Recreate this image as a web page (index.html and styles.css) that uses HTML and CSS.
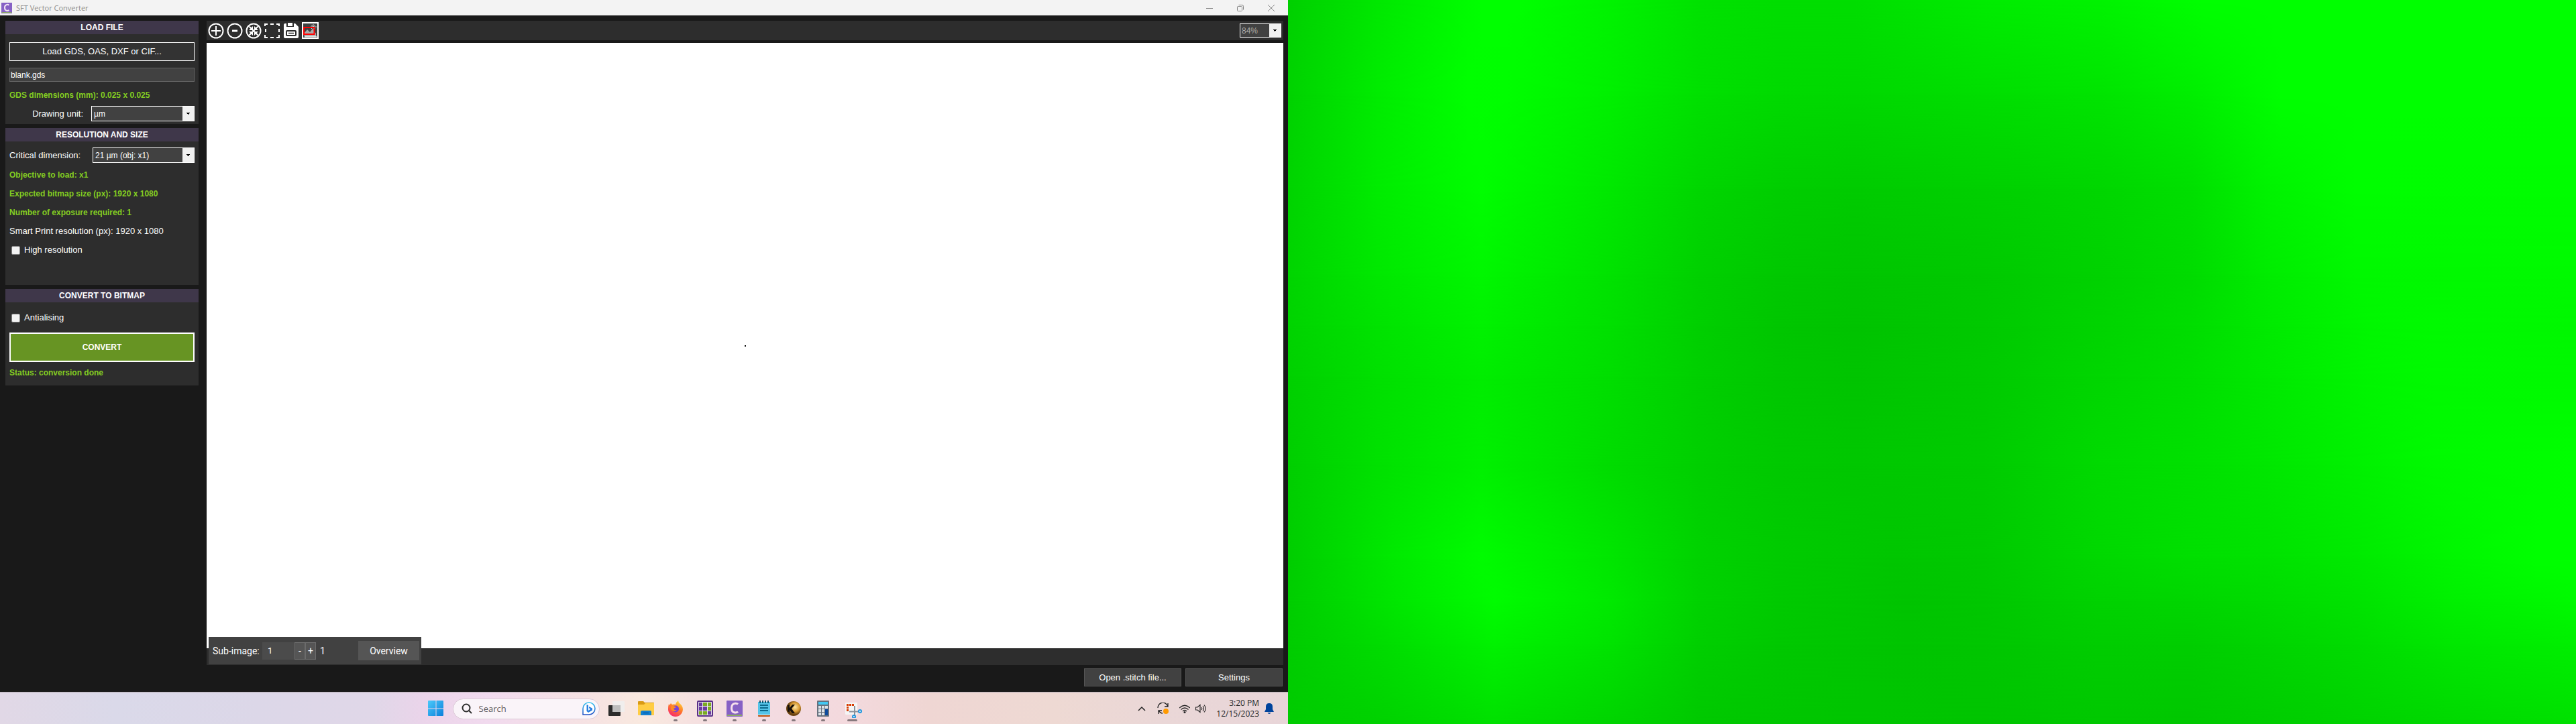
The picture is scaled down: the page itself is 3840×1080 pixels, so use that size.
FILE: index.html
```html
<!DOCTYPE html>
<html lang="en">
<head>
<meta charset="utf-8">
<title>SFT Vector Converter</title>
<link rel="stylesheet" href="styles.css">
</head>
<body>
<div class="desktop">
  <div class="monitor">
    <div class="window">
      <header class="titlebar">
        <svg class="app-icon" width="16" height="16" viewBox="0 0 24 24" aria-hidden="true"><rect width="24" height="24" fill="#8661c5"/><rect x="1" y="21" width="22" height="2" fill="#8bab62"/><path d="M17 5.500C15 3.800 7.500 3 7.500 11.200S15 18.500 17 16.500" fill="none" stroke="#f4e6f4" stroke-width="3"/></svg>
        <h1 class="title">SFT Vector Converter</h1>
        <div class="caption-buttons">
          <button class="caption-button" type="button" aria-label="Minimize"><svg width="12" height="12" viewBox="0 0 12 12"><path d="M1 6.500h10"/></svg></button>
          <button class="caption-button" type="button" aria-label="Restore"><svg width="12" height="12" viewBox="0 0 12 12"><rect x="1.500" y="3.500" width="7" height="7" rx="1"/><path d="M3.500 1.500h5q2 0 2 2v5"/></svg></button>
          <button class="caption-button" type="button" aria-label="Close"><svg width="12" height="12" viewBox="0 0 12 12"><path d="M1 1l10 10M11 1L1 11"/></svg></button>
        </div>
      </header>
      <div class="workspace">
        <aside class="sidebar">
          <section class="panel">
            <h2 class="panel-title">LOAD FILE</h2>
            <div class="panel-body load-body">
              <button class="load-button" type="button">Load GDS, OAS, DXF or CIF...</button>
              <input class="file-name" type="text" value="blank.gds" aria-label="File name">
              <p class="info">GDS dimensions (mm): 0.025 x 0.025</p>
              <div class="field">
                <label class="field-label field-label-right" for="unit">Drawing unit:</label>
                <div class="combo combo-unit"><select id="unit"><option>µm</option></select><svg width="17" height="21" viewBox="0 0 17 21"><path d="M6 9h5v1h-1v1H9v1H8v-1H7v-1H6z"/></svg></div>
              </div>
            </div>
          </section>
          <section class="panel">
            <h2 class="panel-title">RESOLUTION AND SIZE</h2>
            <div class="panel-body resolution-body">
              <div class="field">
                <label class="field-label" for="critical">Critical dimension:</label>
                <div class="combo combo-critical"><select id="critical"><option>21 µm (obj: x1)</option></select><svg width="17" height="21" viewBox="0 0 17 21"><path d="M6 9h5v1h-1v1H9v1H8v-1H7v-1H6z"/></svg></div>
              </div>
              <p class="info">Objective to load: x1</p>
              <p class="info">Expected bitmap size (px): 1920 x 1080</p>
              <p class="info">Number of exposure required: 1</p>
              <p class="note">Smart Print resolution (px): 1920 x 1080</p>
              <label class="check"><input type="checkbox">High resolution</label>
            </div>
          </section>
          <section class="panel">
            <h2 class="panel-title">CONVERT TO BITMAP</h2>
            <div class="panel-body convert-body">
              <label class="check"><input type="checkbox">Antialising</label>
              <button class="convert-button" type="button">CONVERT</button>
              <p class="info">Status: conversion done</p>
            </div>
          </section>
        </aside>
        <main class="viewer">
          <div class="toolbar">
            <button class="tool" type="button" aria-label="Zoom in"><svg width="24" height="24" viewBox="0 0 24 24"><circle cx="12" cy="12" r="10.500" fill="none" stroke="#fff" stroke-width="2"/><path d="M12 5v14M5 12h14" stroke="#fff" stroke-width="2"/></svg></button>
            <button class="tool" type="button" aria-label="Zoom out"><svg width="24" height="24" viewBox="0 0 24 24"><circle cx="12" cy="12" r="10.500" fill="none" stroke="#fff" stroke-width="2"/><path d="M8 12h8" stroke="#fff" stroke-width="3"/></svg></button>
            <button class="tool" type="button" aria-label="Fit"><svg width="24" height="24" viewBox="0 0 24 24"><circle cx="12" cy="12" r="10.500" fill="none" stroke="#fff" stroke-width="2"/><path d="M5.500 5.500l13 13M18.500 5.500l-13 13" stroke="#fff" stroke-width="2"/><path d="M11 5v6H5zM13 5v6h6zM11 19v-6H5zM13 19v-6h6z" fill="#fff"/></svg></button>
            <button class="tool" type="button" aria-label="Select area"><svg width="24" height="24" viewBox="0 0 24 24"><path d="M1 5V2h4M9 2h5M18 2h4v3M22 9v5M22 18v4h-4M14 22H9M5 22H1v-4M2 14V9" fill="none" stroke="#fff" stroke-width="2"/></svg></button>
            <button class="tool" type="button" aria-label="Save"><svg width="24" height="24" viewBox="0 0 24 24"><path d="M1 3q0-2 2-2h2v5h11V1h2l5 5v15q0 2-2 2H3q-2 0-2-2z" fill="#fff"/><path d="M7 0h7v5H7z" fill="#fff"/><rect x="5" y="12" width="14" height="7" rx="1" fill="#fff" stroke="#2d2d2d" stroke-width="2"/><path d="M8 15.500h8" stroke="#2d2d2d" stroke-width="1.500"/></svg></button>
            <button class="tool" type="button" aria-label="Show image"><svg width="25" height="25" viewBox="0 0 25 25"><rect x="1" y="1" width="23" height="23" fill="#414141" stroke="#fff" stroke-width="2"/><path d="M3 17l5-6 4 4 4-5 5 7v5H4z" fill="#aaa"/><path d="M17 3v9M13 7h9M14 4l6 6M20 4l-6 6" stroke="#c8c8c8"/><path d="M4 21.500h18" stroke="#ddd" stroke-width="2"/><rect x="3" y="8" width="15.500" height="10" fill="none" stroke="#f00" stroke-width="2"/></svg></button>
            <div class="combo combo-zoom"><select aria-label="Zoom"><option>84%</option></select><svg width="17" height="19" viewBox="0 0 17 19"><path d="M6 8h5v1h-1v1H9v1H8v-1H7V9H6z"/></svg></div>
          </div>
          <div class="canvas">
            <svg class="drawing" width="2" height="2" viewBox="0 0 2 2" aria-label="Drawing"><rect width="2" height="2"/></svg>
            <div class="navigator">
              <label class="nav-label" for="sub">Sub-image:</label>
              <div class="spinner"><input id="sub" type="text" value="1"><button type="button">-</button><button type="button">+</button></div>
              <span class="nav-total">1</span>
              <button class="overview" type="button">Overview</button>
            </div>
          </div>
          <div class="strip"></div>
          <div class="actions">
            <button class="action" type="button">Open .stitch file...</button>
            <button class="action" type="button">Settings</button>
          </div>
        </main>
      </div>
    </div>
    <footer class="taskbar">
      <nav class="apps">
        <button class="app" type="button" aria-label="Start"><svg width="24" height="24" viewBox="0 0 24 24"><defs><linearGradient id="win" x1="0" y1="0" x2="1" y2="1" gradientUnits="objectBoundingBox"><stop offset="0" stop-color="#4cc9fa"/><stop offset="1" stop-color="#0a7fdb"/></linearGradient></defs><path d="M0 1q0-1 1-1h10.500v11.500H0zM12.500 0H22q1 0 1 1v10.500H12.500zM0 12.500h11.500V23H1q-1 0-1-1zM12.500 12.500H23V22q0 1-1 1h-9.500z" fill="url(#win)"/></svg></button>
        <div class="search">
          <svg width="16" height="16" viewBox="0 0 16 16" aria-hidden="true"><circle cx="7" cy="7" r="5.500" fill="none" stroke="#2c2c2c" stroke-width="2"/><path d="M11 11l4 4" stroke="#2c2c2c" stroke-width="2"/></svg>
          <input type="text" placeholder="Search" aria-label="Search">
          <svg width="20" height="20" viewBox="0 0 20 20" aria-hidden="true"><defs><linearGradient id="bing" x1="0" y1="0" x2="0" y2="1"><stop offset="0" stop-color="#36c4f0"/><stop offset="1" stop-color="#1f4fc4"/></linearGradient></defs><path d="M1 19V10a9 9 0 1 1 9 9z" fill="#fff" stroke="url(#bing)" stroke-width="1.500"/><path d="M6.500 4l2.500 1v8l3-2-2-2V7l5 2.500v3L9 16l-2.500-2z" fill="#2a7fe0"/></svg>
        </div>
        <button class="app" type="button" aria-label="Task view"><svg width="24" height="24" viewBox="0 0 24 24"><rect x="0" y="7" width="18" height="16" rx="1" fill="#2b2b2b"/><rect x="6" y="1" width="18" height="16" rx="1" fill="#efefef" opacity=".85"/><path d="M6 7h12v10H6z" fill="#bdbdbd"/></svg></button>
        <button class="app" type="button" aria-label="File Explorer"><svg width="24" height="24" viewBox="0 0 24 24"><path d="M0 2q0-1 1-1h7l2 2h13q1 0 1 1v17H0z" fill="#d99a13"/><path d="M0 6h9l2-2h13v17q0 1-1 1H1q-1 0-1-1z" fill="#ffcd43"/><path d="M4 22v-5q0-2 2-2h12q2 0 2 2v5z" fill="#1380d0"/><path d="M8 18.500h8" stroke="#0b5ca8" stroke-width="1.500"/></svg></button>
        <button class="app open" type="button" aria-label="Firefox"><svg width="24" height="24" viewBox="0 0 24 24"><defs><linearGradient id="fox" x1=".8" y1="0" x2=".3" y2="1"><stop offset="0" stop-color="#ffe03a"/><stop offset=".5" stop-color="#ff7a2b"/><stop offset="1" stop-color="#f7266d"/></linearGradient></defs><path d="M2 5l1 2 2-3 2 2q3-1 5 0 1-4 4-6 0 3 3 5 4 4 4 8a11 11 0 0 1-22 0Q1 8 2 5z" fill="url(#fox)"/><circle cx="12" cy="12.500" r="5" fill="#7b43d6"/><path d="M5 9q3-2 6 0l2 1-4 2q1 3 5 2-4 4-8 0-2-2-1-5z" fill="#ff8a22"/></svg></button>
        <button class="app open" type="button" aria-label="Layout tool"><svg width="24" height="24" viewBox="0 0 24 24"><rect x="1" y="1" width="22" height="22" rx="1" fill="#e9e4ee" stroke="#5a2f87" stroke-width="2"/><path d="M3 3h5v5H3zM3 10h5v5H3zM10 10h5v5h-5zM16 16h5v5h-5z" fill="#6a3ca0"/><path d="M9 3h6v5H9zM16 3h5v5h-5zM16 9h5v6h-5zM3 16h5v5H3zM9 16h6v5H9z" fill="#7cab22"/><path d="M3 9h5v6H3zM9 9h6v6H9z" fill="#6a3ca0"/><path d="M3 8.500h18M3 15.500h18M8.500 3v18M15.500 3v18" stroke="#f0eaf5"/></svg></button>
        <button class="app open" type="button" aria-label="SFT Vector Converter"><svg width="24" height="24" viewBox="0 0 24 24"><rect width="24" height="24" rx="1" fill="#8661c5"/><rect x="1" y="21" width="22" height="2" fill="#8bab62"/><path d="M17 5.500C15 3.800 7.500 3 7.500 11.200S15 18.500 17 16.500" fill="none" stroke="#f7e0ec" stroke-width="3"/></svg></button>
        <button class="app open" type="button" aria-label="Notepad"><svg width="24" height="24" viewBox="0 0 24 24"><path d="M3 20h18v3q0 1-1 1H4q-1 0-1-1z" fill="#b84e0d"/><path d="M3 19h18v3H3z" fill="#f4f4f4"/><path d="M3 2h18v19H3z" fill="#55c4e8"/><path d="M6 7h12M6 11h12M6 15h12" stroke="#0c6a8d" stroke-width="2"/><path d="M6 0v4M10 0v4M14 0v4M18 0v4" stroke="#12556f" stroke-width="2"/></svg></button>
        <button class="app open" type="button" aria-label="KLayout"><svg width="24" height="24" viewBox="0 0 24 24"><defs><radialGradient id="gold" cx=".6" cy=".4"><stop offset="0" stop-color="#ffe9a8"/><stop offset=".6" stop-color="#d99a33"/><stop offset="1" stop-color="#6b4310"/></radialGradient></defs><circle cx="12" cy="12" r="11" fill="url(#gold)"/><path d="M3 7l3-1v5l4-5h4l-5 6 5 7h-4l-4-5v4l-3-2z" fill="#17100a"/></svg></button>
        <button class="app open" type="button" aria-label="Calculator"><svg width="24" height="24" viewBox="0 0 24 24"><rect x="3" width="18" height="24" rx="1" fill="#66717d"/><path d="M5 2h14v4H5z" fill="#42c8f3"/><path d="M5 8h4v4H5zM10 8h4v4h-4zM15 8h4v4h-4zM5 13h4v4H5zM10 13h4v4h-4zM5 18h4v4H5zM10 18h4v4h-4z" fill="#dde2e8"/><path d="M15 13h4v9h-4z" fill="#0d4a9c"/></svg></button>
        <button class="app open active" type="button" aria-label="Snipping Tool"><svg width="28" height="28" viewBox="0 0 28 28"><rect x="3" y="5" width="18" height="18" rx="1" fill="#f5f5f5"/><path d="M6.500 18V8.500H17" fill="none" stroke="#d83b01" stroke-width="3" stroke-dasharray="3 1"/><path d="M17 10v10M9 18.500h15M17 18v8" stroke="#8a9099" stroke-width="2"/><circle cx="25" cy="18" r="2" fill="#fff" stroke="#1c96de" stroke-width="2"/><circle cx="16" cy="26" r="2" fill="#fff" stroke="#1c96de" stroke-width="2"/></svg></button>
      </nav>
      <div class="tray">
        <svg width="12" height="12" viewBox="0 0 12 12" aria-label="Show hidden icons"><path d="M1 9l5-5 5 5" fill="none" stroke="#222" stroke-width="1.500"/></svg>
        <svg width="18" height="18" viewBox="0 0 18 18" aria-label="Updates"><path d="M1 8a7.500 7.500 0 0 1 14.500-3M16 1v5h-5M8 16q-3 0-6-4M2 17v-5h5" fill="none" stroke="#222" stroke-width="1.300"/><circle cx="13" cy="13" r="4" fill="#ff9a00"/></svg>
        <svg width="16" height="16" viewBox="0 0 16 16" aria-label="Wi-Fi"><path d="M0 7q8-7.500 16 0M2.500 9.500q5.500-5 11 0M5 12q3-3 6 0" fill="none" stroke="#222" stroke-width="1.200"/><circle cx="8" cy="13.500" r="1.500" fill="#222"/></svg>
        <svg width="16" height="16" viewBox="0 0 16 16" aria-label="Volume"><path d="M.500 6v4H3l4 3.500v-11L3 6zM9 6q1.500 2 0 4M11 4q3 4 0 8M13 2.500q4.500 5.500 0 11" fill="none" stroke="#222" stroke-width="1.100"/></svg>
        <div class="clock"><time>3:20 PM</time><time>12/15/2023</time></div>
        <svg width="14" height="16" viewBox="0 0 14 16" aria-label="Notifications"><path d="M7 0q5 0 5 5v4l2 4H0l2-4V5q0-5 5-5zM4.500 14h5q-1 2-2.500 2t-2.500-2z" fill="#00439c"/></svg>
      </div>
    </footer>
  </div>
  <div class="backdrop">
    <div class="glow glow-1"></div>
    <div class="glow glow-2"></div>
    <div class="glow glow-3"></div>
    <div class="glow glow-4"></div>
    <div class="glow glow-5"></div>
    <div class="glow glow-6"></div>
    <div class="glow glow-7"></div>
    <div class="glow glow-8"></div>
    <div class="glow glow-9"></div>
    <div class="glow glow-10"></div>
    <div class="glow glow-11"></div>
  </div>
</div>
</body>
</html>
```
FILE: styles.css
```css
* { box-sizing: border-box; }

body {
  margin: 0;
  font: 13px/16px "Liberation Sans", Arial, sans-serif;
  color: #fff;
}

h1, h2, p { margin: 0; }

button, input, select {
  margin: 0;
  padding: 0;
  border: 0;
  border-radius: 0;
  font: inherit;
  color: inherit;
  background: none;
}

svg { display: block; flex: none; }

.desktop {
  display: grid;
  grid-template-columns: 1fr 1fr;
  min-height: 100vh;
}

.monitor {
  display: flex;
  flex-direction: column;
  min-width: 0;
}

/* Application window */

.window {
  flex: 1;
  display: flex;
  flex-direction: column;
  background: #191919;
}

.titlebar {
  display: flex;
  align-items: center;
  gap: 6px;
  height: 23px;
  padding-left: 2px;
  background: #f3f3f3;
}

.title {
  flex: 1;
  font: 11px/16px "Open Sans", sans-serif;
  color: #8d8d8d;
}

.caption-buttons { display: flex; }

.caption-button {
  display: grid;
  place-items: center;
  width: 46px;
  height: 22px;
}

.caption-button svg {
  fill: none;
  stroke: #858585;
}

.caption-buttons { padding-right: 2px; }

.workspace {
  flex: 1;
  display: grid;
  grid-template-columns: 288px 1fr;
  gap: 12px;
  padding: 8px 7px 8px 8px;
}

/* Sidebar */

.sidebar {
  display: flex;
  flex-direction: column;
  gap: 6px;
}

.panel { background: #2d2d2d; }

.panel-title {
  font-size: 12px;
  line-height: 20px;
  text-align: center;
  background: #3f374a;
}

.panel-body {
  display: flex;
  flex-direction: column;
  padding: 12px 6px;
}

.load-body { padding-bottom: 4px; }

.load-button {
  height: 28px;
  border: 1px solid #fff;
  background: #333;
}

.file-name {
  height: 21px;
  margin: 10px 0;
  padding: 0 1px;
  border: 1px solid #656565;
  font-size: 12px;
  background: #414141;
}

.info {
  font-size: 12px;
  font-weight: bold;
  line-height: 20px;
  color: #83cc22;
}

.field {
  display: flex;
  align-items: center;
  justify-content: space-between;
}

.load-body .field { margin-top: 6px; }

.field-label-right {
  flex: 1;
  padding-right: 12px;
  text-align: right;
}

.combo {
  display: flex;
  height: 23px;
  border: 1px solid #fff;
  background: #414141;
}

.combo select {
  flex: 1;
  min-width: 0;
  padding-left: 3px;
  appearance: none;
  font-size: 12px;
}

.combo svg { background: #f0f0f0; }

.combo-unit { width: 154px; }
.combo-critical { width: 152px; }

.combo-zoom {
  width: 62px;
  height: 21px;
  margin-left: auto;
  color: #a9a9a9;
}

.combo-zoom select { padding-left: 2px; }

.resolution-body {
  gap: 8px;
  min-height: 214px;
  padding-top: 9px;
}

.check {
  display: flex;
  align-items: center;
  gap: 6px;
  height: 20px;
  padding-left: 3px;
}

.check input {
  width: 13px;
  height: 13px;
  border: 1px solid #858585;
  border-radius: 2px;
  appearance: none;
  background: #f3f3f3;
}

.note { line-height: 20px; }

.convert-body { padding: 13px 6px 9px; }

.convert-button {
  height: 44px;
  margin: 12px 0 6px;
  border: 2px solid #fff;
  font-size: 12px;
  font-weight: bold;
  background: #679423;
}

/* Viewer */

.viewer {
  display: flex;
  flex-direction: column;
}

.toolbar {
  display: flex;
  align-items: center;
  height: 29px;
  margin-bottom: 4px;
  padding-right: 3px;
  background: #2d2d2d;
}

.tool {
  display: grid;
  place-items: center;
  width: 28px;
  height: 27px;
}

.canvas {
  position: relative;
  flex: 1;
  display: grid;
  background: #fff;
}

.drawing { place-self: center; }

.strip {
  height: 25px;
  background: #2d2d2d;
}

/* Floating bar over the bottom left corner of the canvas */
.navigator {
  position: absolute;
  left: 3px;
  bottom: -24px;
  display: flex;
  align-items: center;
  width: 317px;
  height: 41px;
  padding: 0 3px 0 6px;
  font: 14px/20px Roboto, sans-serif;
  background: #414141;
}

.nav-label { width: 74px; }

.spinner {
  display: flex;
  width: 80px;
  height: 26px;
  background: #4b4b4b;
}

.spinner input {
  flex: 1;
  min-width: 0;
  padding-left: 8px;
  font-size: 13px;
}

.spinner button {
  width: 16px;
  border: 1px solid #6b6b6b;
  background: #555;
}

.nav-total { margin-left: 6px; }

.overview {
  width: 91px;
  height: 29px;
  margin-left: auto;
  background: #555;
}

.actions {
  display: flex;
  justify-content: flex-end;
  gap: 6px;
  padding: 5px 1px 0 0;
}

.action {
  width: 145px;
  height: 27px;
  border: 1px solid #555;
  background: #414141;
}

/* Taskbar */

.taskbar {
  display: grid;
  grid-template-columns: 1fr auto 1fr;
  height: 48px;
  border-top: 1px solid #b9b0b8;
  font: 12px/16px "Open Sans", sans-serif;
  color: #262626;
  background: linear-gradient(90deg, #e1d8e6 0%, #dad9e9 9%, #dcd7e8 20%, #e0d7e8 29%, #ebd4ea 33%, #f1daee 38%, #f5e1e3 45%, #f9e9df 50%, #f5e0e0 54%, #f3dce2 58%, #f3d9dd 66%, #efd6d3 72%, #eed9d3 82%, #ead7d7 90%, #e8d5d8 100%);
}

.apps {
  grid-column: 2;
  display: flex;
  align-items: center;
}

.app {
  position: relative;
  display: grid;
  place-items: center;
  width: 44px;
  height: 48px;
}

.open::after {
  content: "";
  position: absolute;
  left: 19px;
  bottom: 5px;
  width: 6px;
  height: 3px;
  border-radius: 2px;
  background: #86797d;
}

.active::after {
  left: 14px;
  width: 15px;
}

.search {
  display: flex;
  align-items: center;
  gap: 10px;
  width: 219px;
  height: 31px;
  margin: 0 3px;
  padding: 0 5px 0 12px;
  border: 1px solid #dccbd8;
  border-radius: 16px;
  background: #faf4f9;
}

.search input {
  flex: 1;
  min-width: 0;
  font-size: 13px;
}

.search input::placeholder {
  color: #5f5b60;
  opacity: 1;
}

.tray {
  grid-column: 3;
  display: flex;
  align-items: center;
  justify-content: flex-end;
  gap: 8px;
  padding-right: 21px;
}

.tray > :first-child { margin-right: 9px; }
.tray > :nth-child(2) { margin-right: 7px; }

.clock {
  display: flex;
  flex-direction: column;
  width: 71px;
  text-align: right;
}

/* Second monitor: soft green field, built from overlapping horizontal sweeps */

.backdrop {
  display: grid;
  background: #00d000;
}

.glow { grid-area: 1 / 1; }

.glow-1 {
  background: linear-gradient(90deg, rgb(0 208 0) 0%, rgb(0 232 0) 7%, rgb(0 255 0) 15%, rgb(0 255 0) 18%, rgb(0 243 0) 25%, rgb(0 226 0) 32%, rgb(0 222 0) 38%, rgb(0 222 0) 44%, rgb(0 236 0) 54%, rgb(0 243 0) 63%, rgb(0 255 0) 71%, rgb(0 255 0) 100%);
}

.glow-2 {
  background: linear-gradient(90deg, rgb(0 210 0) 0%, rgb(0 236 0) 7%, rgb(0 255 0) 14%, rgb(0 254 0) 17%, rgb(0 240 0) 25%, rgb(0 224 0) 32%, rgb(0 218 0) 38%, rgb(0 216 0) 44%, rgb(0 222 0) 54%, rgb(0 228 0) 63%, rgb(0 238 0) 70%, rgb(0 255 0) 77%, rgb(0 255 0) 100%);
  mask-image: linear-gradient(transparent 0%, #000 13%);
}

.glow-3 {
  background: linear-gradient(90deg, rgb(0 211 0) 0%, rgb(0 236 0) 7%, rgb(0 254 0) 15%, rgb(0 232 0) 25%, rgb(0 214 0) 32%, rgb(0 206 0) 38%, rgb(0 203 0) 44%, rgb(0 208 0) 54%, rgb(0 214 0) 63%, rgb(0 223 0) 70%, rgb(0 243 0) 76%, rgb(0 254 0) 83%, rgb(0 253 0) 100%);
  mask-image: linear-gradient(transparent 13%, #000 26%);
}

.glow-4 {
  background: linear-gradient(90deg, rgb(0 212 0) 0%, rgb(0 232 0) 7%, rgb(0 247 0) 15%, rgb(0 226 0) 25%, rgb(0 208 0) 32%, rgb(0 200 0) 38%, rgb(0 197 0) 44%, rgb(0 201 0) 54%, rgb(0 210 0) 63%, rgb(0 219 0) 70%, rgb(0 236 0) 76%, rgb(0 248 0) 83%, rgb(0 250 0) 100%);
  mask-image: linear-gradient(transparent 26%, #000 38%);
}

.glow-5 {
  background: linear-gradient(90deg, rgb(0 211 0) 0%, rgb(0 227 0) 7%, rgb(0 242 0) 15%, rgb(0 224 0) 25%, rgb(0 207 0) 32%, rgb(0 198 0) 38%, rgb(0 195 0) 44%, rgb(0 201 0) 54%, rgb(0 212 0) 63%, rgb(0 221 0) 70%, rgb(0 234 0) 76%, rgb(0 247 0) 84%, rgb(0 250 0) 89%, rgb(0 247 0) 100%);
  mask-image: linear-gradient(transparent 38%, #000 45%);
}

.glow-6 {
  background: linear-gradient(90deg, rgb(0 208 0) 0%, rgb(0 224 0) 7%, rgb(0 237 0) 15%, rgb(0 222 0) 25%, rgb(0 207 0) 32%, rgb(0 199 0) 38%, rgb(0 196 0) 44%, rgb(0 202 0) 54%, rgb(0 214 0) 63%, rgb(0 222 0) 70%, rgb(0 233 0) 76%, rgb(0 246 0) 84%, rgb(0 250 0) 89%, rgb(0 249 0) 100%);
  mask-image: linear-gradient(transparent 45%, #000 52%);
}

.glow-7 {
  background: linear-gradient(90deg, rgb(0 206 0) 0%, rgb(0 225 0) 7%, rgb(0 240 0) 15%, rgb(0 220 0) 25%, rgb(0 207 0) 32%, rgb(0 201 0) 38%, rgb(0 199 0) 44%, rgb(0 203 0) 54%, rgb(0 218 0) 63%, rgb(0 224 0) 70%, rgb(0 231 0) 76%, rgb(0 241 0) 83%, rgb(0 250 0) 89%, rgb(0 255 0) 100%);
  mask-image: linear-gradient(transparent 52%, #000 64%);
}

.glow-8 {
  background: linear-gradient(90deg, rgb(0 205 0) 0%, rgb(0 233 0) 8%, rgb(0 252 0) 15%, rgb(0 230 0) 25%, rgb(0 210 0) 32%, rgb(0 203 0) 38%, rgb(0 198 0) 47%, rgb(0 201 0) 54%, rgb(0 216 0) 63%, rgb(0 223 0) 70%, rgb(0 226 0) 76%, rgb(0 234 0) 83%, rgb(0 246 0) 90%, rgb(0 255 0) 97%, rgb(0 255 0) 100%);
  mask-image: linear-gradient(transparent 64%, #000 77%);
}

.glow-9 {
  background: linear-gradient(90deg, rgb(0 205 0) 0%, rgb(0 230 0) 8%, rgb(0 252 0) 16%, rgb(0 233 0) 25%, rgb(0 210 0) 32%, rgb(0 202 0) 38%, rgb(0 196 0) 48%, rgb(0 199 0) 54%, rgb(0 210 0) 63%, rgb(0 214 0) 70%, rgb(0 219 0) 76%, rgb(0 227 0) 83%, rgb(0 240 0) 90%, rgb(0 250 0) 100%);
  mask-image: linear-gradient(transparent 77%, #000 83%);
}

.glow-10 {
  background: linear-gradient(90deg, rgb(0 204 0) 0%, rgb(0 222 0) 8%, rgb(0 242 0) 16%, rgb(0 227 0) 25%, rgb(0 207 0) 32%, rgb(0 200 0) 38%, rgb(0 196 0) 48%, rgb(0 198 0) 54%, rgb(0 205 0) 63%, rgb(0 206 0) 70%, rgb(0 212 0) 76%, rgb(0 220 0) 83%, rgb(0 231 0) 90%, rgb(0 239 0) 100%);
  mask-image: linear-gradient(transparent 83%, #000 89%);
}

.glow-11 {
  background: linear-gradient(90deg, rgb(0 203 0) 0%, rgb(0 209 0) 7%, rgb(0 224 0) 16%, rgb(0 212 0) 25%, rgb(0 200 0) 32%, rgb(0 197 0) 44%, rgb(0 196 0) 54%, rgb(0 200 0) 63%, rgb(0 199 0) 70%, rgb(0 204 0) 76%, rgb(0 210 0) 83%, rgb(0 216 0) 90%, rgb(0 224 0) 100%);
  mask-image: linear-gradient(transparent 89%, #000 100%);
}
```
